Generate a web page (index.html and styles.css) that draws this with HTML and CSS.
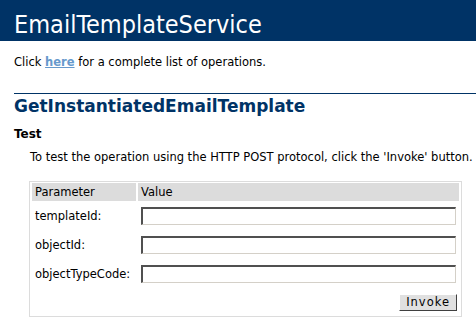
FILE: index.html
```html
<!DOCTYPE html>
<html lang="en">
<head>
  <meta charset="UTF-8">
  <title>EmailTemplateService Web Service</title>
  <link rel="stylesheet" href="styles.css">
</head>
<body>
  <div class="heading1">EmailTemplateService</div>

  <div class="content">
    <p class="intro">Click <a class="link" href="#">here</a> for a complete list of operations.</p>

    <h2>GetInstantiatedEmailTemplate</h2>

    <h3>Test</h3>
    <p class="frmtext">To test the operation using the HTTP POST protocol, click the 'Invoke' button.</p>

    <form class="test-form" action="#" method="post">
      <table class="param-table">
        <tr>
          <td class="frmheader label-col">Parameter</td>
          <td class="frmheader">Value</td>
        </tr>
        <tr>
          <td class="frmtext-cell">templateId:</td>
          <td><input class="frmInput" type="text" name="templateId"></td>
        </tr>
        <tr>
          <td class="frmtext-cell">objectId:</td>
          <td><input class="frmInput" type="text" name="objectId"></td>
        </tr>
        <tr>
          <td class="frmtext-cell">objectTypeCode:</td>
          <td><input class="frmInput" type="text" name="objectTypeCode"></td>
        </tr>
        <tr>
          <td class="button-cell"></td>
          <td class="button-cell"><input class="button" type="submit" value="Invoke"></td>
        </tr>
      </table>
    </form>
  </div>
</body>
</html>
```

FILE: styles.css
```css
* {
  box-sizing: border-box;
}

body {
  margin: 0;
  font-family: 'DejaVu Sans', Verdana, sans-serif;
  font-size: 11.5px;
  color: #000000;
  background: #ffffff;
}

.heading1 {
  background-color: #003366;
  color: #ffffff;
  font-family: 'DejaVu Sans Condensed', 'DejaVu Sans', Tahoma, sans-serif;
  font-stretch: condensed;
  font-size: 25px;
  font-weight: normal;
  height: 41px;
  line-height: 29px;
  padding: 10px 0 0 14px;
  white-space: nowrap;
}

.content {
  margin-left: 14px;
}

.intro {
  margin: 14px 0 0;
  line-height: 14px;
}

a.link {
  color: #6699cc;
  font-weight: bold;
  text-decoration: underline;
}

h2 {
  margin: 24px 0 0;
  padding-top: 2px;
  border-top: 1px solid #003366;
  color: #003366;
  font-size: 17px;
  font-weight: bold;
  line-height: 20px;
}

h3 {
  margin: 11px 0 0;
  font-size: 12px;
  font-weight: bold;
  line-height: 14px;
}

.frmtext {
  margin: 9px 0 0 16px;
  line-height: 14px;
  white-space: nowrap;
}

.test-form {
  margin: 17px 0 0 15px;
}

.param-table {
  width: 433px;
  border: 1px solid #dcdcdc;
  border-spacing: 2px 1px;
  font-size: 11.5px;
  line-height: 14px;
}

.param-table td {
  height: 28px;
  padding: 0 3px;
  vertical-align: middle;
}

.param-table td.frmheader {
  height: 18px;
  background: #dcdcdc;
}

.param-table td.button-cell {
  height: 26px;
  text-align: right;
}

.label-col {
  width: 104px;
}

.frmtext-cell {
  white-space: nowrap;
}

.frmInput {
  display: block;
  width: 100%;
  height: 18px;
  margin: 0;
  padding: 0 2px;
  font-family: 'DejaVu Sans', Verdana, sans-serif;
  font-size: 11px;
  background: #ffffff;
  border-style: solid;
  border-width: 2px 1px 1px 2px;
  border-color: #505050 #d4d0c8 #d4d0c8 #505050;
}

.button {
  display: inline-block;
  vertical-align: middle;
  height: 17px;
  margin: 0 -1px 0 0;
  padding: 0 6px;
  font-family: 'DejaVu Sans', Verdana, sans-serif;
  font-size: 11.5px;
  line-height: 13px;
  letter-spacing: 1px;
  color: #000000;
  background: #e0e0e0;
  border-style: solid;
  border-width: 1px;
  border-color: #ffffff #404040 #404040 #ffffff;
}
```
